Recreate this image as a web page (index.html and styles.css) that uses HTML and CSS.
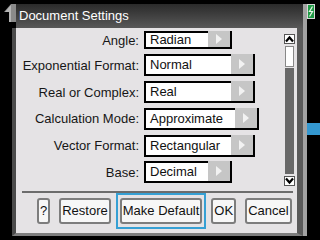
FILE: index.html
```html
<!DOCTYPE html>
<html lang="en">
<head>
    <meta charset="UTF-8">
    <title>Document Settings</title>
    <link rel="stylesheet" href="styles.css">
</head>
<body>
<div class="screen">
    <!-- document tab icon -->
    <svg class="doc-tab" width="12" height="18" viewBox="0 0 12 18">
        <polygon points="0,8 7,0 12,0 12,18 5,18 5,8" fill="#8a8a8a"/>
        <polygon points="1,8 7,1 7,18 5,18 5,8" fill="#b4b4b4"/>
    </svg>
    <div class="dialog">
        <div class="title">Document Settings</div>
        <div class="body">
            <div class="scroll">
                <div class="rows">
                    <div class="row first">
                        <span class="lbl">Angle:</span>
                        <div class="sel w-s"><span>Radian</span><i class="arr"></i></div>
                    </div>
                    <div class="row">
                        <span class="lbl">Exponential Format:</span>
                        <div class="sel w-m"><span>Normal</span><i class="arr"></i></div>
                    </div>
                    <div class="row">
                        <span class="lbl">Real or Complex:</span>
                        <div class="sel w-m"><span>Real</span><i class="arr"></i></div>
                    </div>
                    <div class="row">
                        <span class="lbl">Calculation Mode:</span>
                        <div class="sel w-l"><span>Approximate</span><i class="arr"></i></div>
                    </div>
                    <div class="row">
                        <span class="lbl">Vector Format:</span>
                        <div class="sel w-m"><span>Rectangular</span><i class="arr"></i></div>
                    </div>
                    <div class="row">
                        <span class="lbl">Base:</span>
                        <div class="sel w-s"><span>Decimal</span><i class="arr"></i></div>
                    </div>
                </div>
                <div class="sbar">
                    <div class="sbtn">
                        <svg width="9" height="8" viewBox="0 0 9 8"><polyline points="1,6.5 4.5,2.5 8,6.5" fill="none" stroke="#000" stroke-width="2.2"/></svg>
                    </div>
                    <div class="thumb"></div>
                    <div class="track"></div>
                    <div class="sbtn down">
                        <svg width="9" height="8" viewBox="0 0 9 8"><polyline points="1,1.5 4.5,5.5 8,1.5" fill="none" stroke="#000" stroke-width="2.2"/></svg>
                    </div>
                </div>
            </div>
            <div class="sep"></div>
            <div class="btns">
                <div class="btn">?</div>
                <div class="btn">Restore</div>
                <div class="focus-ring"><div class="btn">Make Default</div></div>
                <div class="btn">OK</div>
                <div class="btn">Cancel</div>
            </div>
        </div>
    </div>
    <div class="side">
        <svg class="battery" width="8" height="15" viewBox="0 0 8 15">
            <rect x="0.5" y="0.5" width="7" height="14" fill="#1f9a45" stroke="#d8d8d8"/>
            <polyline points="5.5,2.5 2.5,7.5 5.5,7.5 2.5,12.5" fill="none" stroke="#e8f5e8" stroke-width="1.2"/>
        </svg>
        <div class="blue"></div>
    </div>
</div>
</body>
</html>
```

FILE: styles.css
```css
html, body{
    margin: 0;
    padding: 0;
    background-color: #000;
}
.screen{
    position: relative;
    display: flex;
    width: 320px;
    height: 240px;
    padding-top: 4px;
    box-sizing: border-box;
    overflow: hidden;
    background-color: #000;
    font-family: "Liberation Sans", Arial, sans-serif;
    font-size: 13px;
}
.doc-tab{
    position: absolute;
    left: 4px;
    top: 4px;
}
.dialog{
    display: flex;
    flex-direction: column;
    width: 295px;
    height: 232px;
    margin-left: 12px;
    box-sizing: border-box;
    border-right: 4px solid #a2a2a2;
}
.title{
    height: 24px;
    margin-left: 4px;
    padding-left: 3px;
    line-height: 24px;
    color: #fff;
    background: linear-gradient(#2a2a2a, #585858);
}
.body{
    flex: 1;
    display: flex;
    flex-direction: column;
    background-color: #e5e3e5;
    border-left: 4px solid #4a4a4a;
    border-right: 6px solid #5a5a5a;
    border-bottom: 3px solid #7e7e7e;
}
.scroll{
    display: flex;
    height: 160px;
}
.rows{
    width: 268px;
}
.row{
    display: flex;
    align-items: center;
    height: 26.75px;
}
.row.first{
    height: 24px;
}
.lbl{
    width: 123px;
    margin-right: 5px;
    text-align: right;
    color: #161616;
}
.sel{
    display: flex;
    height: 22px;
    box-sizing: border-box;
    border: 2px solid #000;
    background-color: #fff;
}
.first .sel{
    height: 18px;
}
.sel span{
    flex: 1;
    padding-left: 4px;
    line-height: 18px;
    color: #111;
}
.first .sel span{
    line-height: 14px;
}
.w-s{ width: 88px; }
.w-m{ width: 111px; }
.w-l{ width: 115px; }
.arr{
    display: flex;
    align-items: center;
    justify-content: center;
    width: 22px;
    margin-top: -2px;
    background-color: #c6c6c6;
}
.arr:after{
    content: '';
    border-left: 6px solid #f2f2f2;
    border-top: 5px solid transparent;
    border-bottom: 5px solid transparent;
}
.sbar{
    display: flex;
    flex-direction: column;
    width: 11px;
    padding: 6px 0 2px;
    box-sizing: border-box;
}
.sbtn{
    display: flex;
    align-items: center;
    justify-content: center;
    height: 10px;
    box-sizing: border-box;
    border: 1px solid #555;
    background-color: #fff;
}
.sbtn.down{
    margin-top: 2px;
}
.thumb{
    height: 21px;
    margin: 2px 1px 0;
    box-sizing: border-box;
    border: 1px solid #888;
    background-color: #fff;
}
.track{
    flex: 1;
    margin: 1px 1px 0;
    background-color: #686868;
}
.sep{
    height: 2px;
    margin: 3px 4px 0 6px;
    background-color: #6c6c6c;
}
.btns{
    display: flex;
    align-items: flex-start;
    gap: 9px;
    margin-top: 5px;
    padding-left: 21px;
}
.btn{
    height: 26px;
    padding: 0 1px;
    box-sizing: border-box;
    border: 2px solid #7d7d7d;
    border-radius: 3px;
    line-height: 22px;
    color: #111;
    background-color: #f7f7f7;
}
.focus-ring{
    margin: -5px -4px 0;
    padding: 3px 2px;
    border: 2px solid #36a0d4;
}
.side{
    display: flex;
    flex-direction: column;
    width: 13px;
}
.blue{
    height: 12px;
    margin-top: 104px;
    background-color: #3498d0;
}
```
